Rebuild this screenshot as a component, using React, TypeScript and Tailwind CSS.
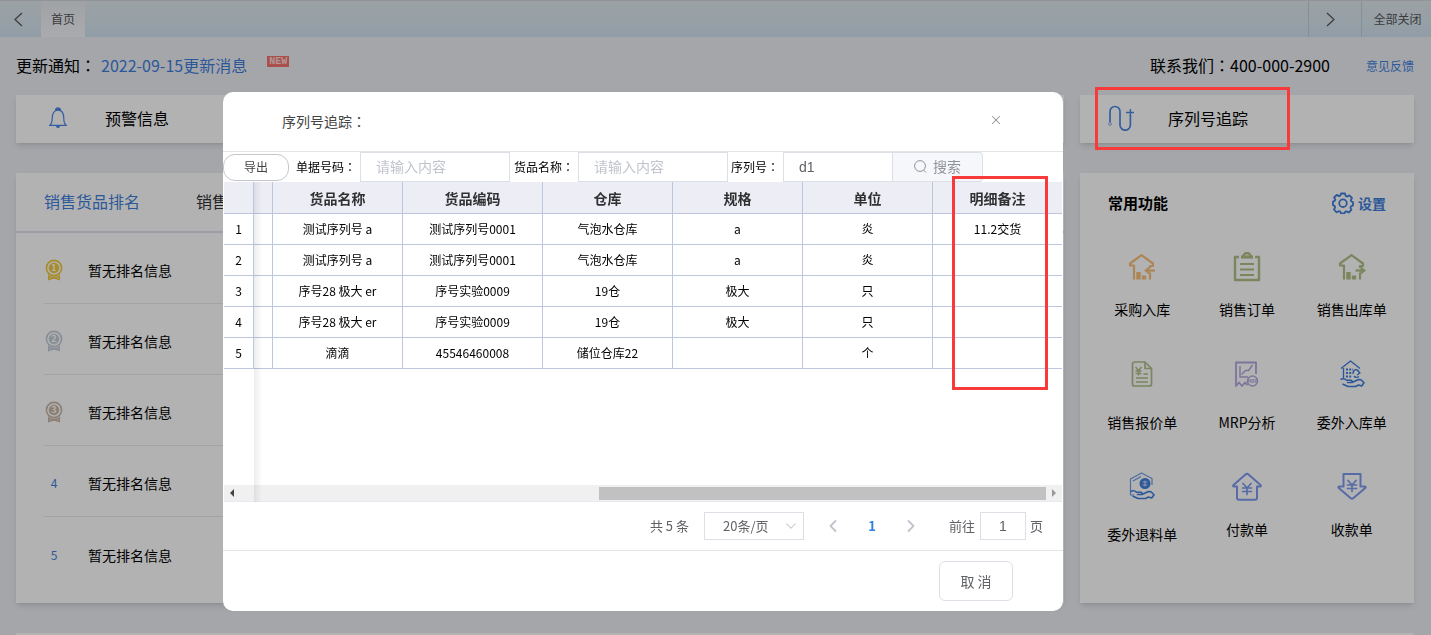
import { ReactNode } from "react";
import { ChevronDown, ChevronLeft, ChevronRight, X } from "lucide-react";

const columns = [
  { name: "货品名称", width: "w-[130px]" },
  { name: "货品编码", width: "w-[140px]" },
  { name: "仓库", width: "w-[130px]" },
  { name: "规格", width: "w-[130px]" },
  { name: "单位", width: "w-[130px]" },
  { name: "明细备注", width: "" },
];

const rows = [
  ["测试序列号 a", "测试序列号0001", "气泡水仓库", "a", "炎", "11.2交货"],
  ["测试序列号 a", "测试序列号0001", "气泡水仓库", "a", "炎", ""],
  ["序号28 极大 er", "序号实验0009", "19仓", "极大", "只", ""],
  ["序号28 极大 er", "序号实验0009", "19仓", "极大", "只", ""],
  ["滴滴", "45546460008", "储位仓库22", "", "个", ""],
];

const medals = ["text-[#efc93f]", "text-[#c3ccd6]", "text-[#c8b5a6]"];

// full width colon that sits in the middle of its box
function Colon() {
  return <span className="font-['Noto_Sans_CJK_TC',sans-serif]">：</span>;
}

function Arrow({ right }: { right?: boolean }) {
  return (
    <svg width="9" height="15" viewBox="0 0 9 15" fill="none" stroke="currentColor" strokeWidth="1.200">
      <path d={right ? "M1 1l7 6.500L1 14" : "M8 1L1 7.500 8 14"} />
    </svg>
  );
}

function Bell() {
  return (
    <svg width="20" height="22" viewBox="0 0 20 22" fill="none" stroke="#4a86e4" strokeWidth="1.2" strokeLinecap="round" strokeLinejoin="round">
      <path d="M1.5 18.3h17M1.8 18.2c2-1.6 2.4-3.4 2.4-6.700 0-4.800 1.800-8.300 5.800-8.300s5.800 3.500 5.800 8.300c0 3.300.4 5.100 2.400 6.700" />
      <path d="M7.500 2.500c.4-1 1.300-1.600 2.500-1.600s2.100.6 2.500 1.600z" fill="#4a86e4" />
      <path d="M8.500 18.600c.1 1.200.7 1.700 1.500 1.700s1.400-.5 1.500-1.700z" fill="#4a86e4" />
    </svg>
  );
}

function Trace() {
  return (
    <svg width="26" height="26" viewBox="0 0 26 26" fill="none" stroke="#4a86e4">
      <path d="M2 17.500V6.500a5 5 0 0 1 10 0V20a5.200 5.200 0 0 0 10.400 0V10" strokeWidth="1.700" />
      <circle cx="2" cy="19" r="1.400" strokeWidth="1" stroke="#8fb2ec" />
      <path d="M22.400 4v7M18 7.500h8" strokeWidth="1.400" />
    </svg>
  );
}

function Medal({ rank }: { rank: number }) {
  return (
    <svg width="18" height="22" viewBox="0 0 18 22" fill="none" stroke="currentColor" className={medals[rank - 1]}>
      <circle cx="9" cy="9" r="7.600" strokeWidth="1.600" />
      <circle cx="9" cy="9" r="5" fill="currentColor" strokeWidth="0.600" />
      <path d="M3.700 15.500v5l5.300-1.600 5.300 1.600v-5M4 17.300c3 1.400 7 1.400 10 0" strokeWidth="1.400" />
      <text x="9" y="12.200" textAnchor="middle" fontSize="9" fontWeight="700" fill="#fff" stroke="none">
        {rank}
      </text>
    </svg>
  );
}

function Gear() {
  return (
    <svg width="22" height="22" viewBox="0 0 22 22" fill="none" stroke="#3f7fdc" strokeWidth="1.800" strokeLinejoin="round">
      <path d="M9 1.500h4l.6 2.400 1.500.7 2.300-1.300 2.600 2.800-1.200 2.200.5 1.200 1.700.6v3.400l-2 .9-.6 1.300 1 2.200-2.700 2.600-2.200-1.100-1.400.5-.8 1.600H9l-.8-1.800-1.400-.5-2.200 1.100L2 17.500l1.100-2.200-.5-1.400-1.600-.7V9.600l1.700-.7.6-1.300L2.100 5.500l2.700-2.600L7 4.100l1.300-.5z" />
      <circle cx="11" cy="11.200" r="3.800" />
    </svg>
  );
}

function House({ out }: { out?: boolean }) {
  const color = out ? "#b0c089" : "#f6c07c";
  return (
    <svg width="28" height="28" viewBox="0 0 28 28" fill="none" stroke={color} strokeWidth="2.200" strokeLinejoin="round">
      <path d="M6 26.500V12.500H2V10.500L13.500 2.200 25 10.500v2.500h-3v2" />
      <path d="M10.500 19v7.500M16 22.500v4" strokeWidth="4.400" />
      <path d="M22 19.500v7" />
      {out ? (
        <>
          <path d="M17.500 17.500H24" />
          <path d="M23 14l4.500 3.500L23 21z" fill={color} strokeWidth="0.800" />
        </>
      ) : (
        <>
          <path d="M19 17.500h8" />
          <path d="M21 14l-4.500 3.500L21 21z" fill={color} strokeWidth="0.800" />
        </>
      )}
    </svg>
  );
}

function Clipboard() {
  return (
    <svg width="28" height="30" viewBox="0 0 28 30" fill="none" stroke="#b0c089" strokeWidth="2.400">
      <path d="M6 5H2v23h24V5h-4" strokeLinejoin="round" />
      <path d="M8 5h12" strokeWidth="3.200" />
      <path d="M10.500 4a3.500 3 0 0 1 7 0" />
      <path d="M7 12h14M7 17.500h14M7 23h14" strokeWidth="2.200" />
    </svg>
  );
}

function Quote() {
  return (
    <svg width="22" height="28" viewBox="0 0 22 28" fill="none" stroke="#b0c089" strokeWidth="1.700" strokeLinejoin="round">
      <path d="M14 2H3.500a2 2 0 0 0-2 2v20a2 2 0 0 0 2 2h15a2 2 0 0 0 2-2V8.500z" />
      <path d="M14 2v6.500h6.500" />
      <path d="M4.500 7l3 3.500 3-3.500M7.500 10.500v5M4.500 11h6M4.500 13.500h6M12.500 14H17M5 18h12M5 22h12" strokeWidth="1.500" />
    </svg>
  );
}

function Mrp() {
  return (
    <svg width="26" height="28" viewBox="0 0 26 28" fill="none" stroke="#b4a6e0" strokeWidth="1.800" strokeLinejoin="round">
      <path d="M22 14V2.500H2V26l3-3.500L8 26l3-3.500 2.500 2.500" />
      <path d="M6 6v11h8M7.500 14.500l4-4h3L18.500 5" strokeWidth="1.500" />
      <circle cx="18.500" cy="21" r="5" fill="#fff" strokeWidth="1.400" />
      <text x="18.500" y="23" textAnchor="middle" fontSize="5" fontWeight="700" fill="#b4a6e0" stroke="none">
        MRP
      </text>
    </svg>
  );
}

function Hand() {
  return (
    <path d="M1.500 20.500c2.500-1.200 4.500-.8 6 .8h4.500c1.500.2 1.300 2 0 2.200H8.500h4.500l6.500-3 2.500.2 3 3-2.300 3.300-3.200-1-3 1.500H9L3.500 25" strokeWidth="1.600" />
  );
}

function Outsource() {
  return (
    <svg width="26" height="30" viewBox="0 0 26 30" fill="none" stroke="#3f7fdc" strokeWidth="1.400" strokeLinejoin="round">
      <path d="M2 9.500L11.500 2l9.500 7.500M4.500 9v10.500" />
      <path d="M7 10.500h7M7 14h5.500M7 17.500h5.500" strokeWidth="2" strokeDasharray="2 1.200" />
      <path d="M14 15c0-5 5-6 6-1.500M20 17.500c-2 1.500-4 1-5-.5M18 11l3 3-3 2" />
      <Hand />
    </svg>
  );
}

function Refund() {
  return (
    <svg width="26" height="30" viewBox="0 0 26 30" fill="none" stroke="#3f7fdc" strokeWidth="1.400" strokeLinejoin="round">
      <path d="M5 24H1.500V8L12.500 2 23 7.500V14" stroke="#6d9ee8" strokeWidth="1.200" />
      <path d="M4 10l8-4.500" stroke="#6d9ee8" />
      <circle cx="16" cy="12.500" r="4.800" fill="#3f7fdc" />
      <path d="M13.500 11h5M13.500 14h5M16 9.500v6" stroke="#fff" strokeWidth="0.700" />
      <Hand />
    </svg>
  );
}

function Money({ down }: { down?: boolean }) {
  return (
    <svg width="32" height="30" viewBox="0 0 32 30" fill="none" stroke="#7d9bf0" strokeWidth="2" strokeLinejoin="round" strokeLinecap="round">
      {down ? (
        <path d="M7.500 2h17v12.500h4.200c1 0 1.200.8.5 1.400L17.500 26c-1 .8-2 .8-3 0L2.800 15.900c-.7-.6-.5-1.400.5-1.400h4.200z" />
      ) : (
        <path d="M14.500 2.500c1-.8 2-.8 3 0L29.500 13c.7.700.5 1.500-.5 1.500h-3v11.300a2 2 0 0 1-2 2H8a2 2 0 0 1-2-2V14.500H3c-1 0-1.200-.8-.5-1.500z" />
      )}
      <path d={down ? "M12 8.500l4 4.500 4-4.500M16 13v6.500M11.500 13h9M11.500 16.500h9" : "M12 11.500l4 4.500 4-4.500M16 16v6.500M11.500 16h9M11.500 19.500h9"} strokeWidth="1.700" />
    </svg>
  );
}

const shortcuts: { label: string; icon: ReactNode; tall?: boolean }[] = [
  { label: "采购入库", icon: <House /> },
  { label: "销售订单", icon: <Clipboard /> },
  { label: "销售出库单", icon: <House out /> },
  { label: "销售报价单", icon: <Quote />, tall: true },
  { label: "MRP分析", icon: <Mrp />, tall: true },
  { label: "委外入库单", icon: <Outsource />, tall: true },
  { label: "委外退料单", icon: <Refund />, tall: true },
  { label: "付款单", icon: <Money /> },
  { label: "收款单", icon: <Money down /> },
];

function TopBar() {
  return (
    <header className="flex h-[37px] border-t border-[#d2d5d8] bg-gradient-to-b from-[#dfe8eb] to-[#d1e2f0] text-xs text-[#555]">
      <button aria-label="向左" className="flex w-[41px] items-center pl-3.5">
        <Arrow />
      </button>
      <button className="w-11 bg-gradient-to-b from-[#e4e8ec] to-[#f4f5fa]">首页</button>
      <div className="flex-1" />
      <button aria-label="向右" className="flex w-[53px] items-center border-l border-[#bccddb] pl-[17px]">
        <Arrow right />
      </button>
      <button className="w-[70px] border-l border-[#bccddb] pl-0.5">全部关闭</button>
    </header>
  );
}

function Ranking() {
  return (
    <section className="flex-1 bg-white shadow-md">
      <div className="flex h-[60px] items-center gap-14 border-b-2 border-[#dfe2ec] px-7 pb-0.5 text-base">
        <button className="text-[#3f7fdc]">销售货品排名</button>
        <button className="text-[#333]">销售</button>
      </div>
      <ol className="mx-7">
        {[1, 2, 3, 4, 5].map((rank) => (
          <li key={rank} className="flex h-[71px] items-center gap-6 border-b border-[#ebebeb] pt-1 text-sm last:border-0">
            <span className="flex w-5 justify-center text-xs text-[#3f7fdc]">
              {rank < 4 ? <Medal rank={rank} /> : rank}
            </span>
            暂无排名信息
          </li>
        ))}
      </ol>
    </section>
  );
}

function Shortcuts() {
  return (
    <section className="w-[334px] bg-white pb-6 shadow-md">
      <div className="flex h-[74px] items-start justify-between px-7 pt-[18px]">
        <h2 className="text-[15px] leading-6 font-bold">常用功能</h2>
        <button className="flex h-6 items-center gap-1 text-sm font-bold text-[#3f7fdc]">
          <Gear />
          设置
        </button>
      </div>
      <div className="grid grid-cols-3 px-2.5">
        {shortcuts.map((s) => (
          <button key={s.label} className={`flex flex-col items-center text-sm ${s.tall ? "h-28 gap-[19px]" : "h-[108px] gap-3"}`}>
            <span className={`flex items-center ${s.tall ? "h-[38px]" : "h-10"}`}>{s.icon}</span>
            <span className="leading-5">{s.label}</span>
          </button>
        ))}
      </div>
    </section>
  );
}

function ResultTable() {
  return (
    <div className="relative pr-px pl-px">
      <div className="min-h-[303px]">
        <table className="w-full table-fixed border-separate border-spacing-0 text-center text-xs">
          <thead>
            <tr className="h-8 bg-[#edeef5] text-sm text-[#303133]">
              <th className="w-[30px] border-r border-b border-[#bcc6dc]" />
              <th className="w-[19px] border-r border-b border-[#bcc6dc]" />
              {columns.map((c) => (
                <th key={c.name} className={`${c.width} border-r border-b border-[#bcc6dc] p-0 font-bold last:border-r-0`}>
                  {c.name}
                </th>
              ))}
            </tr>
          </thead>
          <tbody>
            {rows.map((row, i) => (
              <tr key={i} className="h-[31px]">
                <td className="border-r border-b border-[#bcc6dc] p-0">{i + 1}</td>
                <td className="border-r border-b border-[#bcc6dc] p-0" />
                {row.map((cell, j) => (
                  <td key={j} className="border-r border-b border-[#bcc6dc] p-0 last:border-r-0">
                    {cell}
                  </td>
                ))}
              </tr>
            ))}
          </tbody>
        </table>
      </div>
      <div className="flex h-[17px] items-center justify-between border-b border-[#e8eaf2] bg-[#f0f0f0] px-1.5">
        <span className="border-y-4 border-r-4 border-y-transparent border-r-[#444]" />
        <span className="mr-1.5 ml-auto h-[13px] w-[447px] bg-[#c1c1c1]" />
        <span className="border-y-4 border-l-4 border-y-transparent border-l-[#999]" />
      </div>
      {/* edge of the frozen column */}
      <div className="absolute top-0 bottom-0 left-[31px] w-2 bg-gradient-to-r from-black/7 to-transparent" />
      <div className="absolute -top-1.5 right-[15px] h-[214px] w-24 border-3 border-[#f93a3a]" />
    </div>
  );
}

function TraceDialog() {
  const input = "h-[30px] border border-[#dcdfe6] px-[15px] font-['Liberation_Sans','Noto_Sans_CJK_SC',sans-serif] text-sm text-[#606266] placeholder:text-[#c0c4cc]";
  return (
    <div role="dialog" aria-label="序列号追踪" className="w-[840px] rounded-[10px] bg-white">
      <div className="flex h-[60px] items-center justify-between border-b border-[#e4e4e8] pr-[60px] pb-0.5 pl-[59px]">
        <h1 className="text-sm text-[#444]">
          序列号追踪
          <Colon />
        </h1>
        <button aria-label="关闭" className="pb-0.5 text-[#909399]">
          <X size={14} strokeWidth={1.8} />
        </button>
      </div>
      <form className="flex h-[30px] items-center text-xs">
        <button type="button" className="mr-[7px] h-[27px] w-[66px] rounded-[12px] border border-[#c4c6cc] text-[#444]">
          导出
        </button>
        <label htmlFor="bill" className="w-16">
          单据号码
          <Colon />
        </label>
        <input id="bill" placeholder="请输入内容" className={`w-[150px] ${input}`} />
        <label htmlFor="goods" className="w-[68px] pl-1">
          货品名称
          <Colon />
        </label>
        <input id="goods" placeholder="请输入内容" className={`w-[150px] ${input}`} />
        <label htmlFor="serial" className="w-[55px] pl-[3px]">
          序列号
          <Colon />
        </label>
        <input id="serial" defaultValue="d1" className={`w-[110px] ${input}`} />
        <button type="button" className="flex h-[30px] w-[90px] items-center justify-center gap-1.5 rounded-r border border-l-0 border-[#dcdfe6] bg-[#f5f7fa] pb-0.5 text-sm text-[#909399]">
          <svg width="13" height="13" viewBox="0 0 13 13" fill="none" stroke="currentColor">
            <circle cx="6" cy="6" r="5.400" />
            <path d="M9.500 10l2.500 2.500" />
          </svg>
          搜索
        </button>
      </form>
      <ResultTable />
      <div className="flex h-[49px] items-center border-b border-[#e4e4e8] pr-5 text-[13px] text-[#606266]">
        <span className="ml-auto">共 5 条</span>
        <span className="relative ml-[15px] flex items-center">
          <select aria-label="每页条数" className="h-7 w-[100px] appearance-none border border-[#dcdfe6] bg-white pl-[18px]">
            <option>20条/页</option>
          </select>
          <ChevronDown size={18} strokeWidth={1.4} className="absolute right-1 text-[#c0c4cc]" />
        </span>
        <button aria-label="上一页" className="ml-[19px] text-[#c0c4cc]">
          <ChevronLeft size={20} strokeWidth={2.2} />
        </button>
        <button className="w-[58px] font-bold text-[#2f80dd]">1</button>
        <button aria-label="下一页" className="text-[#c0c4cc]">
          <ChevronRight size={20} strokeWidth={2.2} />
        </button>
        <label htmlFor="page" className="ml-7">前往</label>
        <input id="page" defaultValue="1" className="mr-1 ml-[5px] h-7 w-[46px] border border-[#dcdfe6] text-center font-['Liberation_Sans',sans-serif] text-sm" />
        页
      </div>
      <div className="flex h-[60px] items-center justify-end pr-[50px]">
        <button className="h-10 w-[74px] rounded-md border border-[#dcdfe6] text-sm text-[#606266]">取 消</button>
      </div>
    </div>
  );
}

export default function App() {
  return (
    <div className="flex min-h-screen flex-col bg-[#eceef4] font-['Noto_Sans_CJK_SC',sans-serif] text-black">
      <TopBar />
      <div className="flex h-[58px] items-center pr-[17px] pb-0.5 pl-4 text-base">
        <span>
          更新通知
          <Colon />
        </span>
        <a href="#news" className="ml-[5px] text-[#3f7fdc]">2022-09-15更新消息</a>
        <span className="mb-2 ml-5 flex h-[11px] w-[22px] items-center justify-center bg-[#f4716d] font-['Liberation_Mono',monospace] text-[10px] font-bold text-[#ffd9d6]">
          NEW
        </span>
        <span className="ml-auto">
          联系我们
          <Colon />
          400-000-2900
        </span>
        <a href="#feedback" className="ml-9 pt-0.5 text-xs text-[#3f7fdc]">意见反馈</a>
      </div>
      <main className="flex flex-1 flex-col gap-[30px] pr-[17px] pl-4">
        <div className="flex gap-4">
          <a href="#alerts" className="flex h-12 flex-1 items-center gap-[37px] bg-white pb-0.5 pl-8 shadow-md">
            <Bell />
            预警信息
          </a>
          <a href="#trace" className="relative flex h-12 w-[334px] items-center gap-[34px] bg-white pb-0.5 pl-7 shadow-md">
            <Trace />
            序列号追踪
            <span className="absolute -top-2 left-[15px] z-20 h-[63px] w-[195px] border-3 border-[#f93a3a]" />
          </a>
        </div>
        <div className="flex gap-4">
          <Ranking />
          <Shortcuts />
        </div>
        <div className="flex-1 bg-white shadow-md" />
      </main>
      <div className="fixed inset-0 z-10 flex items-start justify-center bg-black/30 pt-[92px] pr-[145px]">
        <TraceDialog />
      </div>
    </div>
  );
}
